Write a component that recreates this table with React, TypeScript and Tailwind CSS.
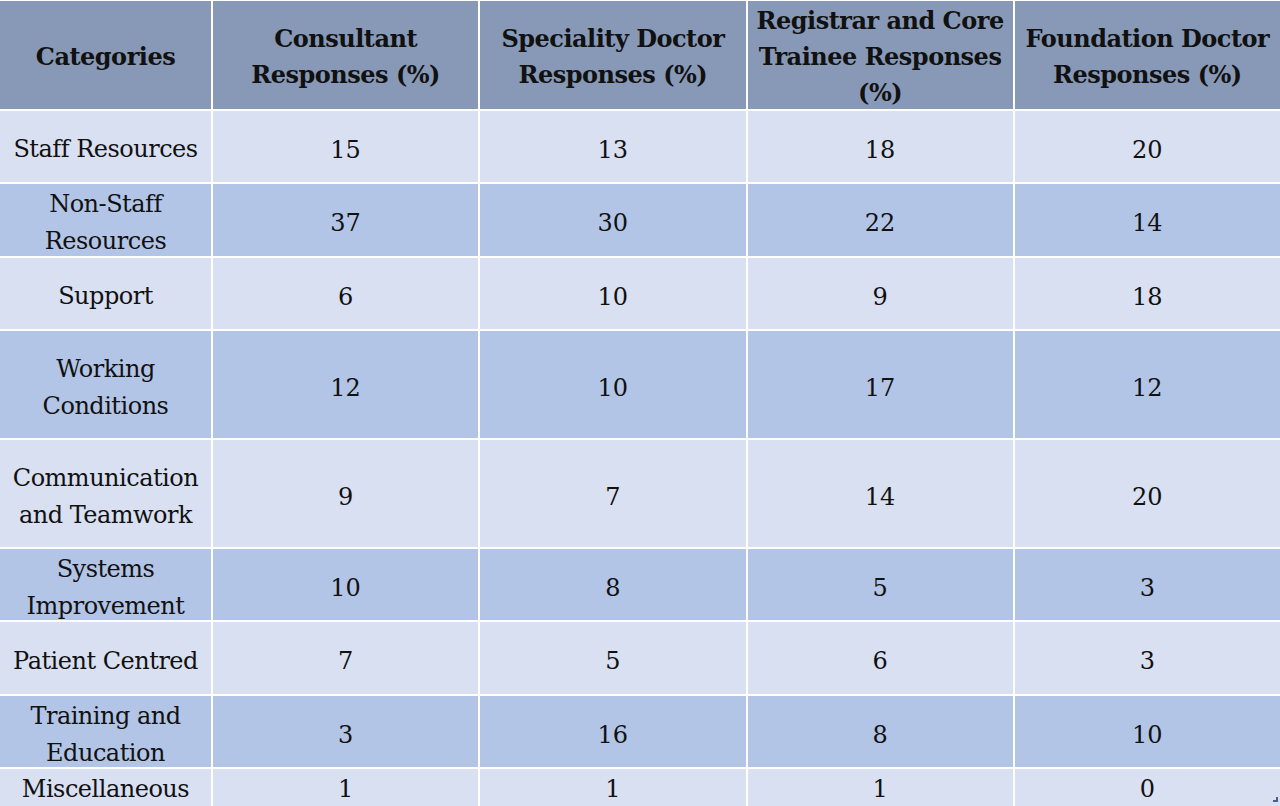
import React from "react";

const rows: { cat: string[]; vals: string[]; h: string; dark: boolean; pad: string }[] = [
  { cat: ["Staff Resources"], vals: ["15", "13", "18", "20"], h: "h-[71px]", dark: false, pad: "pt-[6px]" },
  { cat: ["Non-Staff", "Resources"], vals: ["37", "30", "22", "14"], h: "h-[72px]", dark: true, pad: "pt-[6px]" },
  { cat: ["Support"], vals: ["6", "10", "9", "18"], h: "h-[71px]", dark: false, pad: "pt-[6px]" },
  { cat: ["Working", "Conditions"], vals: ["12", "10", "17", "12"], h: "h-[107px]", dark: true, pad: "pt-[6px]" },
  { cat: ["Communication", "and Teamwork"], vals: ["9", "7", "14", "20"], h: "h-[107px]", dark: false, pad: "pt-[6px]" },
  { cat: ["Systems", "Improvement"], vals: ["10", "8", "5", "3"], h: "h-[71px]", dark: true, pad: "pt-[6px]" },
  { cat: ["Patient Centred"], vals: ["7", "5", "6", "3"], h: "h-[72px]", dark: false, pad: "pt-[6px]" },
  { cat: ["Training and", "Education"], vals: ["3", "16", "8", "10"], h: "h-[71px]", dark: true, pad: "pt-[6px]" },
  { cat: ["Miscellaneous"], vals: ["1", "1", "1", "0"], h: "h-[37px]", dark: false, pad: "pt-[3px]" },
];

const headers: string[][] = [
  ["Categories"],
  ["Consultant", "Responses (%)"],
  ["Speciality Doctor", "Responses (%)"],
  ["Registrar and Core", "Trainee Responses", "(%)"],
  ["Foundation Doctor", "Responses (%)"],
];

export default function App() {
  return (
    <div
      className="w-[1280px] h-[806px] overflow-hidden bg-white pt-px relative"
      style={{ fontFamily: '"DejaVu Serif", "Liberation Serif", serif' }}
    >
      <div className="grid grid-cols-[211px_1fr_1fr_1fr_1fr] gap-[2px] text-[#111111]">
        {headers.map((lines, i) => (
          <div
            key={i}
            className="h-[108px] pt-[4px] bg-[#8799b6] flex flex-col items-center justify-center text-center font-bold text-[24px] leading-[36px] tracking-[-0.5px]"
          >
            {lines.map((l) => (
              <span key={l} className="whitespace-nowrap">{l}</span>
            ))}
          </div>
        ))}
        {rows.map((r, ri) => (
          <React.Fragment key={ri}>
            <div
              className={`${r.h} ${r.pad} ${r.dark ? "bg-[#b3c5e6]" : "bg-[#d9e0f1]"} flex flex-col items-center justify-center text-center text-[24px] leading-[37px] tracking-[-0.5px]`}
            >
              {r.cat.map((l) => (
                <span key={l} className="whitespace-nowrap">{l}</span>
              ))}
            </div>
            {r.vals.map((v, vi) => (
              <div
                key={vi}
                className={`${r.h} ${r.pad} ${r.dark ? "bg-[#b3c5e6]" : "bg-[#d9e0f1]"} flex items-center justify-center text-[24px]`}
              >
                {v}
              </div>
            ))}
          </React.Fragment>
        ))}
      </div>
      <div className="absolute right-[2px] bottom-[4px] w-[5px] h-[5px]">
        <div className="absolute right-0 bottom-0 w-[2px] h-[5px] bg-[#4a5aa0]" />
        <div className="absolute right-0 bottom-0 w-[5px] h-[2px] bg-[#4a5aa0]" />
      </div>
    </div>
  );
}
